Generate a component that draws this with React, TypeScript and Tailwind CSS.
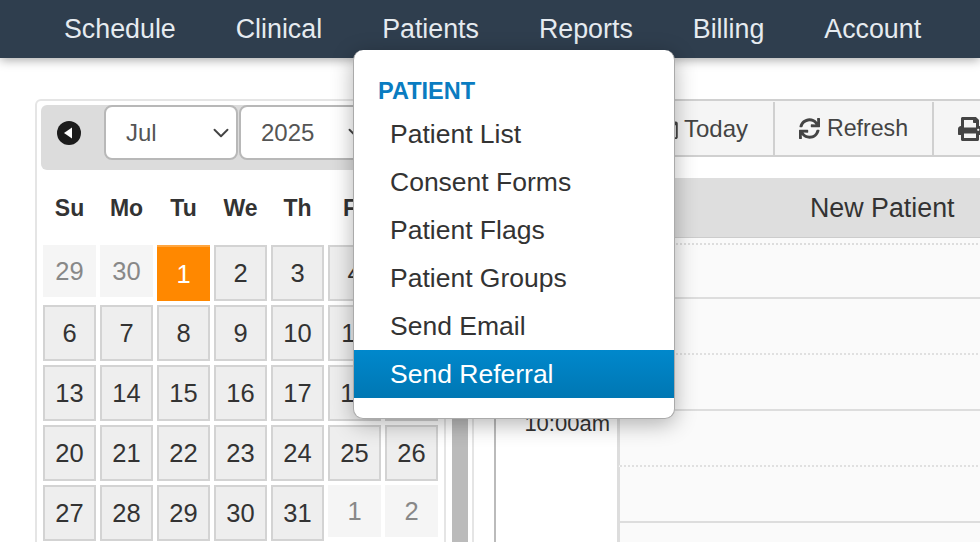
import { FaPrint, FaRegCalendar, FaSync } from 'react-icons/fa';
import { LuChevronDown } from 'react-icons/lu';

const navItems = ['Schedule', 'Clinical', 'Patients', 'Reports', 'Billing', 'Account'];
const weekDays = ['Su', 'Mo', 'Tu', 'We', 'Th', 'Fr', 'Sa'];
const menuItems = ['Patient List', 'Consent Forms', 'Patient Flags', 'Patient Groups', 'Send Email'];

const days = [
  [29, 30, 1, 2, 3, 4, 5],
  [6, 7, 8, 9, 10, 11, 12],
  [13, 14, 15, 16, 17, 18, 19],
  [20, 21, 22, 23, 24, 25, 26],
  [27, 28, 29, 30, 31, 1, 2],
];

function DayCell({ day, row, col }: { day: number; row: number; col: number }) {
  const otherMonth = (row === 0 && day > 20) || (row === 4 && day < 10);
  const today = row === 0 && col === 2;

  if (today) {
    return (
      <div className="h-[56px] flex items-center justify-center border-t-2 border-[#ffa640] bg-[#ff8800] text-white text-[25.5px]">
        {day}
      </div>
    );
  }
  if (otherMonth) {
    return (
      <div className="h-[52px] flex items-center justify-center bg-[#f5f5f5] text-[#888] text-[25.5px]">
        {day}
      </div>
    );
  }
  return (
    <div className="h-[56px] flex items-center justify-center border-2 border-[#d3d3d3] bg-[#eeeeee] text-[#333] text-[25.5px]">
      {day}
    </div>
  );
}

function MonthSelect({ label }: { label: string }) {
  return (
    <div className="w-[134px] h-[55px] flex items-center justify-between pl-[20px] pr-[2px] bg-white border-2 border-[#b8b8b8] rounded-lg text-[#555] text-[24px]">
      {label}
      <LuChevronDown className="w-[26px] h-[26px] text-[#444]" strokeWidth={1.75} />
    </div>
  );
}

function ScheduleRow({ dotted, short, time }: { dotted?: boolean; short?: boolean; time?: string }) {
  return (
    <div className={`flex ${short ? 'h-[54px]' : 'h-[56px]'}`}>
      <div className="w-[121px] shrink-0 bg-white pt-[2px] pr-[7px] text-right text-[22px] leading-[22px] text-[#333]">
        {time}
      </div>
      <div
        className={`flex-1 bg-[#fafafa] border-l-[3px] border-l-[#dddddd] border-b-2 ${
          dotted ? 'border-b-[#e0e0e0] [border-bottom-style:dotted]' : 'border-b-[#dddddd]'
        }`}
      />
    </div>
  );
}

export default function App() {
  return (
    <div className="relative w-[980px] h-[542px] overflow-hidden bg-white font-['Liberation_Sans',Arial,sans-serif]">
      <header className="relative z-10 h-[58px] flex items-center pl-[34px] bg-[#2f3e4e] shadow-[0_2px_10px_rgba(0,0,0,0.35)]">
        {navItems.map((item) => (
          <a key={item} className="px-[30px] text-[26.8px] text-[#e6ebf0]">
            {item}
          </a>
        ))}
      </header>

      <div className="flex pt-[41px] pl-[35px]">
        <div className="w-[411px] h-[460px] shrink-0 p-[4px] border-2 border-[#e5e5e5] rounded-md">
          <div className="h-[65px] flex items-start pl-[63px] bg-[#dcdcdc] rounded-md relative">
            <svg className="absolute left-[16px] top-[16px]" width="24" height="24" viewBox="0 0 24 24">
              <circle cx="12" cy="12" r="12" fill="#1c1c1c" />
              <path d="M15 6.5v11L7 12z" fill="#ffffff" />
            </svg>
            <MonthSelect label="Jul" />
            <div className="w-[1px]" />
            <MonthSelect label="2025" />
          </div>
          <div className="grid grid-cols-[repeat(7,53px)] gap-x-[4px] px-[2px] mt-[22px] mb-[21px]">
            {weekDays.map((d) => (
              <div key={d} className="h-[32px] flex items-center justify-center font-bold text-[23px] text-[#333]">
                {d}
              </div>
            ))}
          </div>
          <div className="grid grid-cols-[repeat(7,53px)] gap-x-[4px] gap-y-[4px] px-[2px]">
            {days.map((week, r) =>
              week.map((day, c) => <DayCell key={`${r}-${c}`} day={day} row={r} col={c} />),
            )}
          </div>
        </div>

        <div className="w-[16px] h-[460px] ml-[6px] shrink-0 bg-[#bbbbbb]" />

        <div className="flex-1 min-w-0 h-[460px] ml-[4px] pl-[20px] border-l-2 border-[#e5e5e5]">
          <div className="flex w-[520px] h-[58px] pt-[1px] bg-[#f5f5f5] border-y-2 border-[#d0d0d0] text-[24px] text-[#444]">
            <div className="w-[141px] shrink-0" />
            <div className="w-[138px] shrink-0 flex items-center justify-end pr-[25px] gap-[5px]">
              <FaRegCalendar className="w-[20px] h-[20px]" />
              Today
            </div>
            <div className="w-[161px] shrink-0 flex items-center justify-center gap-[7px] border-x-2 border-[#d0d0d0] text-[23.2px]">
              <FaSync className="w-[21px] h-[21px]" />
              Refresh
            </div>
            <div className="flex items-center pl-[24px]">
              <FaPrint className="w-[24px] h-[24px]" />
            </div>
          </div>

          <div className="border-l-2 border-[#bbbbbb] mt-[21px] w-[520px]">
            <div className="h-[60px] flex items-center pl-[314px] pt-[2px] bg-[#dedede] border-b border-[#cccccc] text-[26.8px] text-[#333]">
              New Patient
            </div>
            <div className="h-[7px] bg-[#fafafa] border-b-2 border-dotted border-[#dddddd] ml-[121px]" />
            <ScheduleRow short />
            <ScheduleRow dotted />
            <ScheduleRow />
            <ScheduleRow dotted time="10:00am" />
            <ScheduleRow />
            <ScheduleRow dotted />
          </div>
        </div>
      </div>

      <div className="absolute z-20 left-[353px] top-[50px] w-[322px] h-[369px] pt-[24px] bg-white border border-[#aaaaaa] border-t-0 rounded-[10px] shadow-[0_5px_22px_rgba(0,0,0,0.3)]">
        <div className="h-[36px] flex items-center pl-[24px] font-bold text-[23.5px] text-[#0a7cc1]">PATIENT</div>
        {menuItems.map((item) => (
          <div key={item} className="h-[48px] flex items-center pl-[36px] pt-[2px] text-[26.5px] text-[#333]">
            {item}
          </div>
        ))}
        <div className="h-[48px] flex items-center pl-[36px] pt-[2px] text-[26.5px] text-white bg-gradient-to-b from-[#0088cc] to-[#0077b3]">
          Send Referral
        </div>
      </div>
    </div>
  );
}
